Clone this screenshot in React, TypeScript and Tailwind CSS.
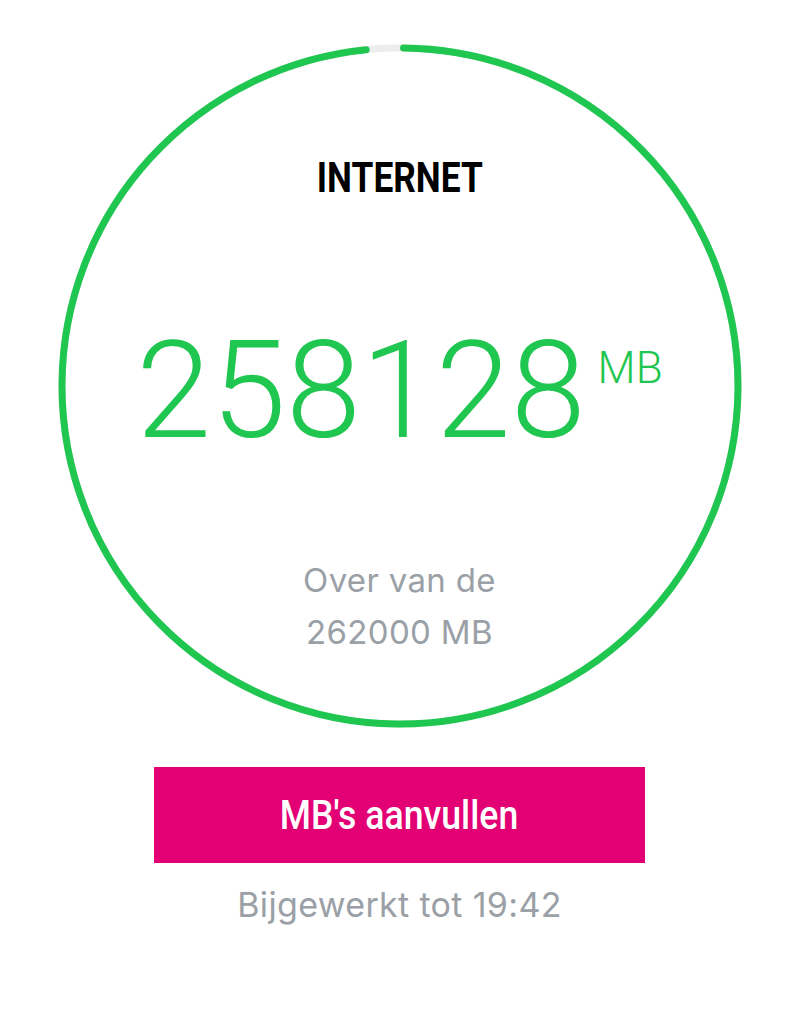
import React from "react";

const TOTAL = 262000;
const LEFT = 258128;

function UsageRing() {
  const r = 338;
  const c = 2 * Math.PI * r;
  const arc = c * (LEFT / TOTAL) - 7;
  return (
    <svg
      className="absolute inset-0"
      width="684"
      height="684"
      viewBox="0 0 684 684"
    >
      <circle cx="342" cy="342" r={r} fill="none" stroke="#ededed" strokeWidth="7" />
      <circle
        cx="342"
        cy="342"
        r={r}
        fill="none"
        stroke="#1fc650"
        strokeWidth="7"
        strokeLinecap="round"
        strokeDasharray={`${arc} ${c}`}
        transform="rotate(-89.4 342 342)"
      />
    </svg>
  );
}

export default function App() {
  return (
    <div className="min-h-screen bg-white flex flex-col items-center pt-[44px] font-['Roboto',sans-serif]">
      <div className="relative w-[684px] h-[684px]">
        <UsageRing />
        <div className="relative flex flex-col items-center pt-[113px]">
          <span className="inline-block text-[42px] leading-none font-bold text-black scale-x-[0.84]">
            INTERNET
          </span>
          <div className="flex items-start mt-[125px] text-[#1fc650] font-light">
            <span className="text-[135px] leading-none">258128</span>
            <span className="text-[44px] leading-none mt-[22px] ml-[12px]">MB</span>
          </div>
          <div className="mt-[95px] flex flex-col items-center text-[#9aa0a6] text-[33px] leading-[52px] font-['Inter',sans-serif] tracking-[0.01em]">
            <span>Over van de</span>
            <span>262000 MB</span>
          </div>
        </div>
      </div>
      <button className="mt-[39px] w-[491px] h-[96px] bg-[#e20074] flex items-center justify-center">
        <span className="inline-block text-white text-[41px] font-medium leading-none scale-x-[0.87]">
          MB's aanvullen
        </span>
      </button>
      <p className="mt-[25px] text-[#9aa0a6] text-[34px] leading-none font-['Inter',sans-serif] tracking-[0.01em]">
        Bijgewerkt tot 19:42
      </p>
    </div>
  );
}
